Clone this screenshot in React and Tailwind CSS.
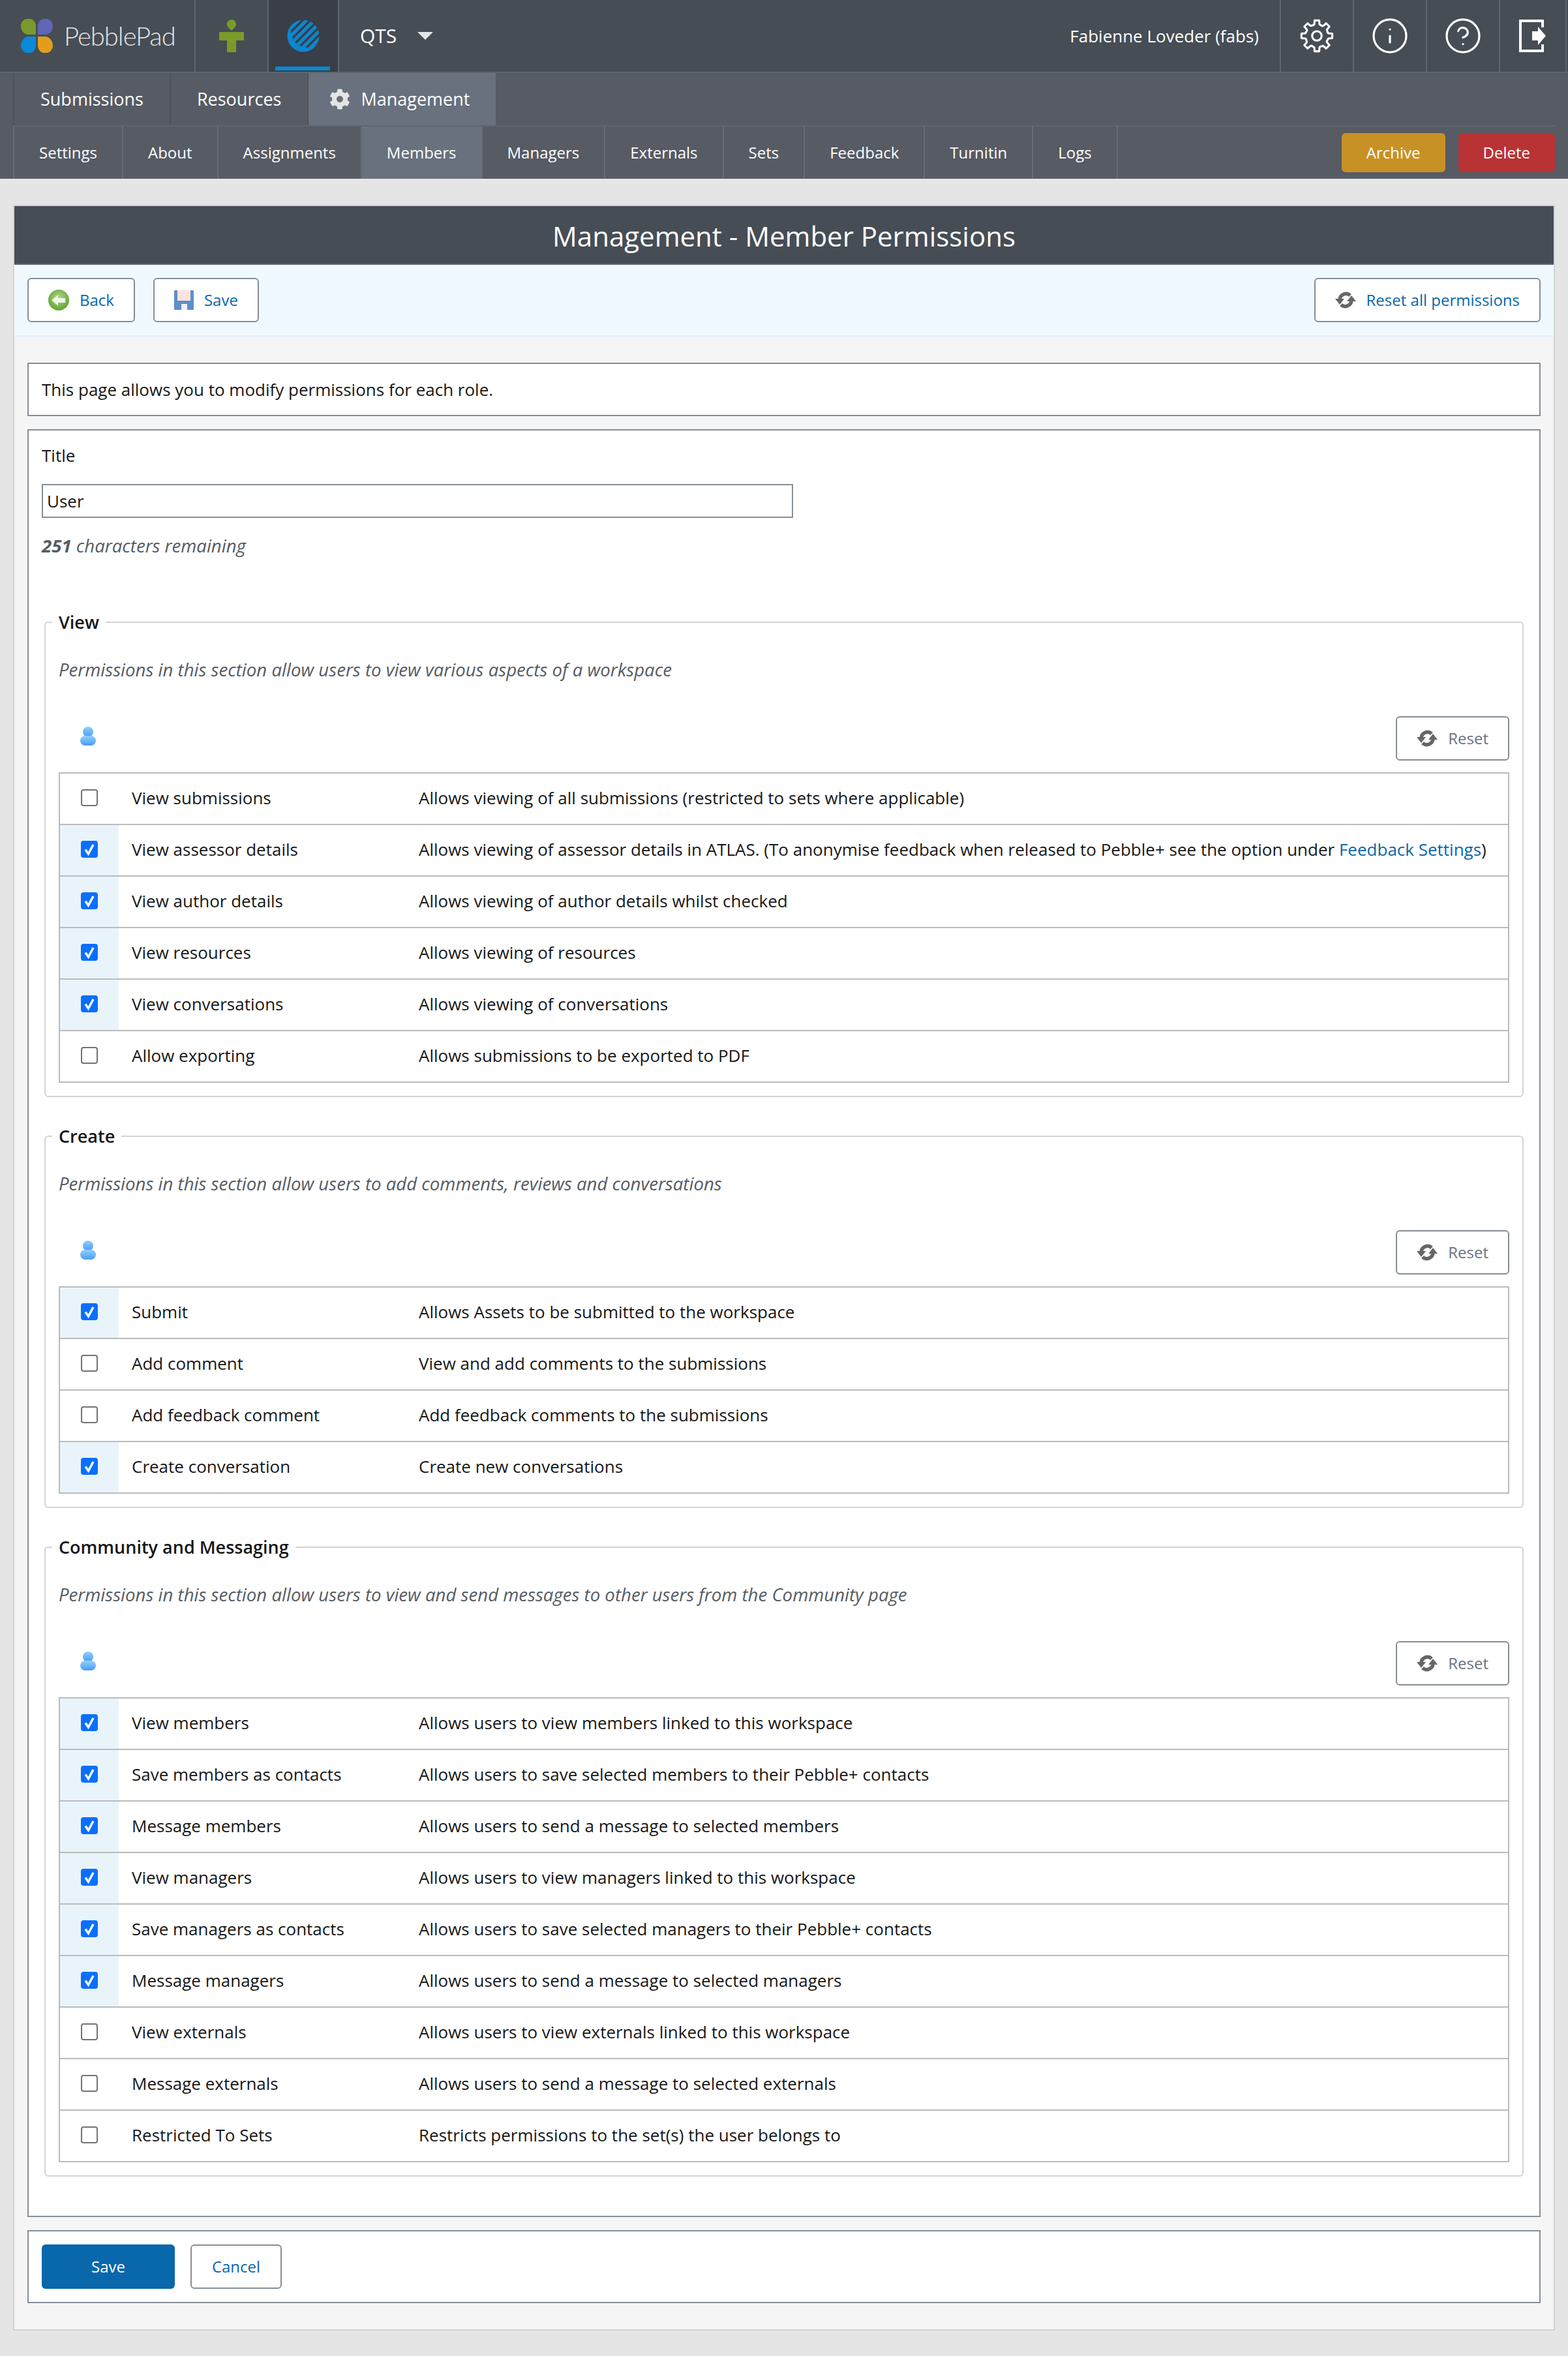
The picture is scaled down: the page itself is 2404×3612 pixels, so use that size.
import React from 'react'
import { Info, CircleHelp } from 'lucide-react'
import { FaCog } from 'react-icons/fa'

const topTabs = ['Settings', 'About', 'Assignments', 'Members', 'Managers', 'Externals', 'Sets', 'Feedback', 'Turnitin', 'Logs']

const sections = [
  {
    title: 'View',
    intro: 'Permissions in this section allow users to view various aspects of a workspace',
    rows: [
      [false, 'View submissions', 'Allows viewing of all submissions (restricted to sets where applicable)'],
      [true, 'View assessor details', 'Allows viewing of assessor details in ATLAS. (To anonymise feedback when released to Pebble+ see the option under ', 'Feedback Settings'],
      [true, 'View author details', 'Allows viewing of author details whilst checked'],
      [true, 'View resources', 'Allows viewing of resources'],
      [true, 'View conversations', 'Allows viewing of conversations'],
      [false, 'Allow exporting', 'Allows submissions to be exported to PDF'],
    ],
  },
  {
    title: 'Create',
    intro: 'Permissions in this section allow users to add comments, reviews and conversations',
    rows: [
      [true, 'Submit', 'Allows Assets to be submitted to the workspace'],
      [false, 'Add comment', 'View and add comments to the submissions'],
      [false, 'Add feedback comment', 'Add feedback comments to the submissions'],
      [true, 'Create conversation', 'Create new conversations'],
    ],
  },
  {
    title: 'Community and Messaging',
    intro: 'Permissions in this section allow users to view and send messages to other users from the Community page',
    rows: [
      [true, 'View members', 'Allows users to view members linked to this workspace'],
      [true, 'Save members as contacts', 'Allows users to save selected members to their Pebble+ contacts'],
      [true, 'Message members', 'Allows users to send a message to selected members'],
      [true, 'View managers', 'Allows users to view managers linked to this workspace'],
      [true, 'Save managers as contacts', 'Allows users to save selected managers to their Pebble+ contacts'],
      [true, 'Message managers', 'Allows users to send a message to selected managers'],
      [false, 'View externals', 'Allows users to view externals linked to this workspace'],
      [false, 'Message externals', 'Allows users to send a message to selected externals'],
      [false, 'Restricted To Sets', 'Restricts permissions to the set(s) the user belongs to'],
    ],
  },
]

// Logo petals
const PebbleLogo = () => (
  <svg width="50" height="52" viewBox="0 0 50 52">
    <path d="M0 11a11.5 11.5 0 0 1 23 0v13H12C5 24 0 18 0 11z" fill="#7a9a2e" />
    <path d="M26 11a11.5 11.5 0 0 1 23 0c0 7-5 13-12 13H26z" fill="#6166b5" />
    <path d="M0 41c0-7 5-14 12-14h11v14a11.5 11.5 0 0 1-23 0z" fill="#0a8ad6" />
    <path d="M26 27h11c7 0 12 7 12 14a11.5 11.5 0 0 1-23 0z" fill="#e39d1c" />
  </svg>
)

const FigureIcon = () => (
  <svg width="38" height="50" viewBox="0 0 38 50" fill="#7a9a2a">
    <path d="M19 17c-3-3-7-6-7-10a7 7 0 0 1 14 0c0 4-4 7-7 10z" />
    <path d="M1 19h36a1 1 0 0 1 1 1v11a1 1 0 0 1-1 1H26v17a1 1 0 0 1-1 1H13a1 1 0 0 1-1-1V32H1a1 1 0 0 1-1-1V20a1 1 0 0 1 1-1z" />
  </svg>
)

const WorkspaceIcon = () => (
  <svg width="50" height="50" viewBox="0 0 50 50">
    <defs>
      <clipPath id="ws-inner">
        <circle cx="31" cy="18" r="25" />
      </clipPath>
    </defs>
    <circle cx="25" cy="25" r="24.5" fill="#0b87d0" />
    <g clipPath="url(#ws-inner)" stroke="#3a3e47" strokeWidth="3.5">
      <path d="M-5 30L30 -5M1 36L36 1M7 42L42 7M13 48L48 13M19 54L54 19M25 60L60 25" />
    </g>
  </svg>
)

// 8 toothed cog outline
const gearPath = (() => {
  const pts = []
  for (let i = 0; i < 8; i++) {
    const a = (i * Math.PI) / 4
    const steps = [[16.5, -0.3], [17.5, -0.22], [23, -0.15], [23, 0.15], [17.5, 0.22]]
    steps.forEach(([r, d]) => {
      pts.push(`${(25 + r * Math.sin(a + d)).toFixed(1)} ${(25 - r * Math.cos(a + d)).toFixed(1)}`)
    })
  }
  return `M${pts.join('L')}Z`
})()

const GearIcon = () => (
  <svg width="52" height="52" viewBox="0 0 50 50" fill="none" stroke="#fff" strokeWidth="3" strokeLinejoin="round">
    <path d={gearPath} />
    <circle cx="25" cy="25" r="7" />
  </svg>
)

const LogoutIcon = () => (
  <svg width="42" height="50" viewBox="0 0 42 50" fill="#fff">
    <path d="M0 0h38v12h-4V4H4v42h30v-8h4v12H0z" />
    <path d="M20 18h9v-7l12 14-12 14v-7h-9z" />
  </svg>
)

const BackIcon = () => (
  <svg width="32" height="32" viewBox="0 0 32 32">
    <defs>
      <radialGradient id="back-g" cx="50%" cy="40%" r="60%">
        <stop offset="0%" stopColor="#b5d98f" />
        <stop offset="100%" stopColor="#5fa32e" />
      </radialGradient>
    </defs>
    <circle cx="16" cy="16" r="16" fill="url(#back-g)" />
    <path d="M5 16l10-8v5h11v7H15v5z" fill="#eef6e4" />
  </svg>
)

const SaveIcon = () => (
  <svg width="30" height="30" viewBox="0 0 30 30">
    <rect width="30" height="30" rx="1" fill="#5d8fc9" />
    <rect x="5" width="20" height="16" fill="#fbe3db" />
    <rect x="11" y="21" width="9" height="9" fill="#eef3fa" />
  </svg>
)

const SyncIcon = () => (
  <svg width="32" height="32" viewBox="0 0 32 32" fill="none">
    <g stroke="#666" strokeWidth="5.5">
      <path d="M7 16a9.5 9.5 0 0 1 16-7" />
      <path d="M25 16a9.5 9.5 0 0 1-16 7" />
    </g>
    <g fill="#666">
      <path d="M0 14h14l-7 9z" />
      <path d="M18 18h14l-7-9z" />
    </g>
  </svg>
)

const PersonIcon = () => (
  <svg width="26" height="30" viewBox="0 0 26 30">
    <defs>
      <linearGradient id="person-g" x1="0" y1="0" x2="0" y2="1">
        <stop offset="0%" stopColor="#8fd0ff" />
        <stop offset="100%" stopColor="#4a9df2" />
      </linearGradient>
    </defs>
    <g fill="url(#person-g)">
      <circle cx="13" cy="8" r="8" />
      <rect x="1" y="14" width="24" height="15" rx="7.5" />
    </g>
  </svg>
)

const ToolButton = ({ icon, children, muted }) => (
  <button className={`flex h-17 items-center gap-4 rounded-md border-2 border-[#868e96] bg-white px-7.5 text-2xl ${muted ? 'text-gray-500' : 'text-[#0967ab]'}`}>
    {icon}
    {children}
  </button>
)

const Checkbox = ({ checked }) => (
  <div className="relative h-6.5 w-6.5">
    <input
      type="checkbox"
      defaultChecked={checked}
      className="peer block h-full w-full appearance-none rounded border-2 border-neutral-500 bg-white checked:border-[#0b6ffd] checked:bg-[#0b6ffd]"
    />
    <svg className="absolute inset-0 hidden peer-checked:block" viewBox="0 0 26 26" fill="none" stroke="#fff" strokeWidth="3.5">
      <path d="M7 13.5l4.5 6.5 7.5-14" />
    </svg>
  </div>
)

const PermissionRow = ({ row, first }) => {
  const [checked, label, text, link] = row
  return (
    <div className={`flex h-[77px] ${first ? '' : 'box-content border-t-2 border-[#bbbbbb]'}`}>
      <div className={`flex w-22.5 items-center justify-center pb-1 ${checked ? 'bg-[#e8f4fa]' : ''}`}>
        <Checkbox checked={checked} />
      </div>
      <div className="flex w-115 items-center pb-1 pl-5">{label}</div>
      <div className="flex flex-1 items-center pb-1">
        <span>
          {text}
          {link ? <a className="text-[#0967ab]">{link}</a> : null}
          {link ? ')' : null}
        </span>
      </div>
    </div>
  )
}

const Section = ({ section, first }) => (
  <fieldset className={`mx-1 rounded-md border-2 border-neutral-300 px-5 pb-5 ${first ? 'mt-20' : 'mt-10'}`}>
    <legend className="-ml-2.5 px-2.5 text-[27px] leading-10 font-semibold">{section.title}</legend>
    <p className="pt-8 text-[27.6px] leading-10 text-[#555c64] italic">{section.intro}</p>
    <div className="mt-13 mb-4.5 flex items-start justify-between">
      <div className="mt-4 ml-8">
        <PersonIcon />
      </div>
      <ToolButton muted icon={<SyncIcon />}>Reset</ToolButton>
    </div>
    <div className="border-2 border-[#bbbbbb]">
      {section.rows.map((row, i) => (
        <PermissionRow key={row[1]} row={row} first={i === 0} />
      ))}
    </div>
  </fieldset>
)

export default function App() {
  return (
    <div className="min-h-screen bg-neutral-200 pb-10 font-['Open_Sans',sans-serif] text-[26px] leading-9 text-neutral-900">
      {/* top bar */}
      <div className="flex h-28 border-b-2 border-[#5f656e] bg-[#474d55] pr-0.5 text-white">
        <div className="flex w-75 items-center gap-4 border-r-2 border-[#5f656e] pl-8">
          <PebbleLogo />
          <span className="font-['Lato',sans-serif] text-[40px] font-light tracking-tight text-neutral-200">PebblePad</span>
        </div>
        <div className="flex w-28 items-center justify-center border-r-2 border-[#5f656e]">
          <FigureIcon />
        </div>
        <div className="relative flex w-27 items-center justify-center border-r-2 border-[#5f656e] bg-[#3a3e47]">
          <WorkspaceIcon />
          <div className="absolute right-3 bottom-0.5 left-2.5 h-1.5 bg-[#0b87d0]" />
        </div>
        <div className="flex items-center gap-8 pl-8 text-3xl">
          QTS
          <div className="h-0 w-0 border-x-12 border-t-12 border-x-transparent border-t-neutral-200" />
        </div>
        <div className="ml-auto flex items-center pr-8">Fabienne Loveder (fabs)</div>
        <div className="flex w-28 items-center justify-center border-l-2 border-[#5f656e]">
          <GearIcon />
        </div>
        <div className="flex w-28 items-center justify-center border-l-2 border-[#5f656e]">
          <Info size={60} strokeWidth={1.3} />
        </div>
        <div className="flex w-28 items-center justify-center border-l-2 border-[#5f656e]">
          <CircleHelp size={60} strokeWidth={1.3} />
        </div>
        <div className="flex w-26 items-center justify-center border-x-2 border-[#5f656e]">
          <LogoutIcon />
        </div>
      </div>

      {/* tabs */}
      <div className="bg-[#565b64] px-5 text-white">
        <div className="box-content flex h-20 border-b-2 border-[#5f656e] text-[27px]">
          <div className="flex items-center border-x-2 border-[#4f545c] px-10">Submissions</div>
          <div className="flex items-center px-10">Resources</div>
          <div className="flex items-center gap-4 border-l-2 border-[#4f545c] bg-[#68717d] pr-10 pl-8">
            <FaCog className="h-8 w-8 text-neutral-200" />
            Management
          </div>
        </div>
        <div className="flex h-20 items-center justify-between text-2xl">
          <div className="flex h-full">
            {topTabs.map((tab) => (
              <div
                key={tab}
                className={`flex items-center border-l-2 border-[#666c75] px-9.5 ${tab === 'Members' ? 'bg-[#68717d]' : ''} ${tab === 'Logs' ? 'border-r-2' : ''}`}
              >
                {tab}
              </div>
            ))}
          </div>
          <div className="flex gap-5">
            <button className="h-15 rounded-md bg-[#c89126] px-9.5">Archive</button>
            <button className="h-15 rounded-md bg-[#b93334] px-9.5">Delete</button>
          </div>
        </div>
      </div>

      {/* main card */}
      <div className="mx-5 mt-10 border-2 border-neutral-300 bg-neutral-100">
        <div className="box-content flex h-22 items-center justify-center border-b-2 border-[#5f656e] bg-[#474d55] text-[42px] text-white">
          <span className="pt-1">Management - Member Permissions</span>
        </div>
        <div className="flex h-27.5 items-center justify-between border-b-2 border-sky-100 bg-sky-50 px-5">
          <div className="flex gap-7">
            <ToolButton icon={<BackIcon />}>Back</ToolButton>
            <ToolButton icon={<SaveIcon />}>Save</ToolButton>
          </div>
          <ToolButton icon={<SyncIcon />}>Reset all permissions</ToolButton>
        </div>

        <div className="flex flex-col gap-5 px-5 pt-10 pb-10">
          <div className="flex h-20.5 items-center border-2 border-[#868e96] bg-white px-5">
            This page allows you to modify permissions for each role.
          </div>

          <div className="border-2 border-[#868e96] bg-white px-5 pt-5 pb-15">
            <div>Title</div>
            <input defaultValue="User" className="mt-6.5 block h-13 w-288 border-2 border-[#868e96] px-1.5" />
            <p className="mt-6 text-[27.6px] text-[#555c64] italic">
              <b>251</b> characters remaining
            </p>
            {sections.map((section, i) => (
              <Section key={section.title} section={section} first={i === 0} />
            ))}
          </div>

          <div className="flex gap-6 border-2 border-[#868e96] bg-white p-5 text-2xl">
            <button className="h-17 w-51 rounded-md bg-[#0967ab] text-white">Save</button>
            <button className="h-17 w-35 rounded-md border-2 border-[#868e96] text-[#0967ab]">Cancel</button>
          </div>
        </div>
      </div>
    </div>
  )
}
